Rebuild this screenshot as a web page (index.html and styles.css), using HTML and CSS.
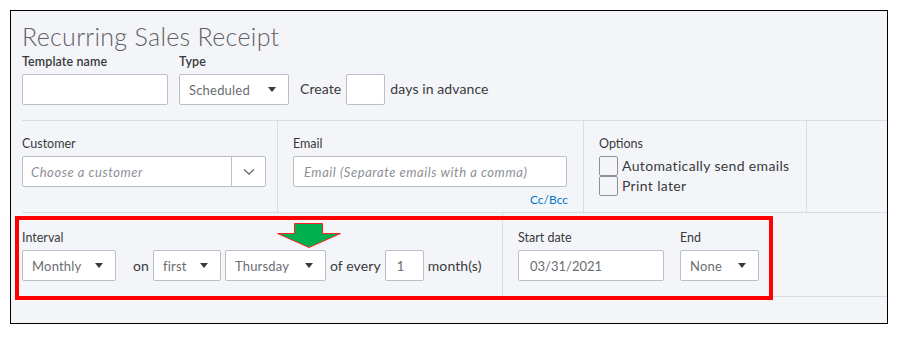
FILE: index.html
```html
<!DOCTYPE html>
<html>
<head>
<meta charset="utf-8">
<link rel="stylesheet" href="styles.css">
</head>
<body>
<div class="frame">
  <h1 class="title">Recurring Sales Receipt</h1>
  <div class="row1">
    <div class="field">
      <label class="lbl">Template name</label>
      <div class="input w-template"></div>
    </div>
    <div class="field">
      <label class="lbl">Type</label>
      <div class="select w-type"><span>Scheduled</span><i class="caret"></i></div>
    </div>
    <div class="inline">
      <span class="txt">Create</span>
      <div class="input w-small"></div>
      <span class="txt">days in advance</span>
    </div>
  </div>

  <div class="row2">
    <div class="col c-customer">
      <label class="lbl">Customer</label>
      <div class="combo">
        <span class="ph">Choose a customer</span>
        <span class="combo-btn">
          <svg width="12" height="8" viewBox="0 0 12 8"><path d="M1 1.5 L6 6 L11 1.5" fill="none" stroke="#6b6c72" stroke-width="1.4"/></svg>
        </span>
      </div>
    </div>
    <div class="col c-email">
      <label class="lbl">Email</label>
      <div class="input w-email"><span class="ph">Email (Separate emails with a comma)</span></div>
      <div class="ccbcc">Cc/Bcc</div>
    </div>
    <div class="col c-options">
      <label class="lbl">Options</label>
      <div class="check"><span class="box"></span><span>Automatically send emails</span></div>
      <div class="check"><span class="box"></span><span>Print later</span></div>
    </div>
    <div class="col c-empty"></div>
  </div>

  <div class="row3">
    <div class="col c-interval">
      <label class="lbl">Interval</label>
      <div class="inline">
        <div class="select w-monthly"><span>Monthly</span><i class="caret"></i></div>
        <span class="txt on">on</span>
        <div class="select w-first"><span>first</span><i class="caret"></i></div>
        <div class="select w-thursday"><span>Thursday</span><i class="caret"></i></div>
        <span class="txt">of every</span>
        <div class="input w-small val"><span>1</span></div>
        <span class="txt">month(s)</span>
      </div>
    </div>
    <div class="col c-dates">
      <div class="field">
        <label class="lbl">Start date</label>
        <div class="input w-date val"><span>03/31/2021</span></div>
      </div>
      <div class="field">
        <label class="lbl">End</label>
        <div class="select w-end"><span>None</span><i class="caret"></i></div>
      </div>
    </div>
  </div>

  <div class="redbox"></div>
  <svg class="arrow" width="66" height="28" viewBox="0 0 66 28">
    <polygon points="17.5,0.5 45.5,0.5 45.5,10.5 63.5,10.5 32,24.5 0.5,10.5 17.5,10.5" fill="#00b04f" stroke="#ff2020" stroke-width="1"/>
  </svg>
</div>
</body>
</html>
```
FILE: styles.css
```css
* { box-sizing: border-box; }
html, body { margin: 0; padding: 0; background: #fff; }
body { font-family: Lato, "Open Sans", sans-serif; color: #393a3d; }

.frame {
  position: relative;
  margin: 10px 0 0 10px;
  width: 878px;
  height: 314px;
  border: 1px solid #000;
  background: #f4f5f8;
  padding-left: 11px;
}

.title {
  margin: 0;
  padding-top: 10px;
  font-size: 25px;
  line-height: 30px;
  font-weight: 300;
  color: #5f6065;
  letter-spacing: 0.3px;
}

.lbl {
  display: block;
  font-size: 12.5px;
  line-height: 16px;
  font-weight: 700;
  color: #393a3d;
  margin-bottom: 4px;
}
.row1 .lbl { font-weight: 600; letter-spacing: 0.1px; }

.row1 {
  display: flex;
  align-items: flex-end;
  gap: 11px;
  margin-top: 3px;
}
.field { display: flex; flex-direction: column; }

.input {
  height: 31px;
  background: #fff;
  border: 1px solid #babec5;
  border-radius: 2px;
  display: flex;
  align-items: center;
  padding: 0 10px;
  font-size: 13px;
  color: #6b6c72;
}
.select {
  height: 31px;
  background: #fff;
  border: 1px solid #babec5;
  border-radius: 2px;
  display: flex;
  align-items: center;
  justify-content: space-between;
  padding: 0 12px 0 9px;
  font-size: 13px;
  color: #6b6c72;
  letter-spacing: 0.2px;
}
.caret {
  width: 0; height: 0;
  border-left: 4px solid transparent;
  border-right: 4px solid transparent;
  border-top: 5px solid #393a3d;
}

.w-template { width: 146px; }
.w-type { width: 110px; }
.w-small { width: 39px; }
.w-email { width: 274px; }
.w-monthly { width: 94px; }
.w-first { width: 68px; }
.w-thursday { width: 101px; }
.w-date { width: 146px; }
.w-end { width: 79px; }
.val span { padding-left: 1px; }

.inline { display: flex; align-items: center; gap: 4px; height: 31px; }
.txt { font-size: 14px; color: #393a3d; letter-spacing: 0.1px; }
.row1 .inline { gap: 5px; }
.row1 .inline .txt { position: relative; top: -1px; }

.row2 {
  display: grid;
  grid-template-columns: 255px 306px 223px 1fr;
  height: 93px;
  margin-top: 15px;
  border-top: 1px solid #d9dce0;
  border-bottom: 1px solid #d9dce0;
}
.col { padding-top: 15px; }
.c-email, .c-options, .c-empty { border-left: 1px solid #d9dce0; padding-left: 15px; }
.row2 .lbl, .row3 .lbl { font-weight: 400; font-size: 12.5px; margin-bottom: 4px; }

.combo {
  width: 244px;
  height: 31px;
  background: #fff;
  border: 1px solid #babec5;
  border-radius: 2px;
  display: flex;
  align-items: center;
}
.ph { font-style: italic; font-size: 13px; color: #8d9096; flex: 1; letter-spacing: 0.55px; }
.combo .ph { padding-left: 8px; }
.combo-btn {
  width: 34px; height: 100%;
  border-left: 1px solid #babec5;
  display: flex; align-items: center; justify-content: center;
}
.ccbcc {
  width: 275px;
  text-align: right;
  font-size: 12px;
  color: #0077c5;
  margin-top: 5px;
}

.check { display: flex; align-items: center; gap: 4px; font-size: 14px; color: #393a3d; height: 19px; letter-spacing: 0.35px; }
.check + .check { margin-top: 1px; }
.box { width: 19px; height: 20px; border: 1px solid #8d9096; border-radius: 2px; background: #f4f5f8; }

.row3 {
  display: grid;
  grid-template-columns: 480px 1fr;
  height: 84px;
  border-bottom: 1px solid #d9dce0;
}
.row3 .col { padding-top: 17px; }
.c-dates { border-left: 1px solid #d9dce0; padding-left: 15px; display: flex; gap: 16px; }
.on { margin: 0 0 0 13px; }
.c-interval .inline .txt { font-size: 14px; }

.redbox {
  position: absolute;
  left: 4px; top: 205px;
  width: 758px; height: 84px;
  border: 4px solid #ff0000;
  pointer-events: none;
}
.arrow {
  position: absolute;
  left: 266px; top: 212px;
}
```
